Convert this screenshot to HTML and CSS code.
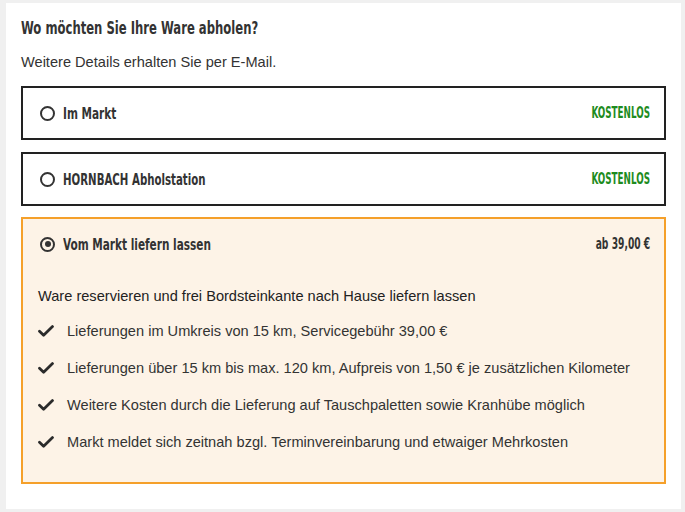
FILE: index.html
```html
<!DOCTYPE html>
<html lang="de">
<head>
<meta charset="utf-8">
<link rel="stylesheet" href="styles.css">
</head>
<body>
<div class="card">
  <h2 class="title"><span class="cond cond-title">Wo möchten Sie Ihre Ware abholen?</span></h2>
  <p class="subtitle">Weitere Details erhalten Sie per E-Mail.</p>

  <div class="option">
    <div class="option-head">
      <span class="label"><span class="radio"></span><span class="cond cond-label">Im Markt</span></span>
      <span class="price free"><span class="cond cond-caps">KOSTENLOS</span></span>
    </div>
  </div>

  <div class="option">
    <div class="option-head">
      <span class="label"><span class="radio"></span><span class="cond cond-label cond-upper">HORNBACH Abholstation</span></span>
      <span class="price free"><span class="cond cond-caps">KOSTENLOS</span></span>
    </div>
  </div>

  <div class="option selected">
    <div class="option-head">
      <span class="label"><span class="radio checked"></span><span class="cond cond-label">Vom Markt liefern lassen</span></span>
      <span class="price"><span class="cond cond-price">ab 39,00 €</span></span>
    </div>
    <div class="option-body">
      <p class="desc">Ware reservieren und frei Bordsteinkante nach Hause liefern lassen</p>
      <ul class="checks">
        <li><svg class="check" viewBox="0 0 16 12" width="16" height="12"><path d="M1.5 6.2 L5.6 10.2 L14.5 1.6" fill="none" stroke="#2b2b2b" stroke-width="2.8" stroke-linecap="round" stroke-linejoin="round"/></svg>Lieferungen im Umkreis von 15 km, Servicegebühr 39,00 €</li>
        <li><svg class="check" viewBox="0 0 16 12" width="16" height="12"><path d="M1.5 6.2 L5.6 10.2 L14.5 1.6" fill="none" stroke="#2b2b2b" stroke-width="2.8" stroke-linecap="round" stroke-linejoin="round"/></svg>Lieferungen über 15 km bis max. 120 km, Aufpreis von 1,50 € je zusätzlichen Kilometer</li>
        <li><svg class="check" viewBox="0 0 16 12" width="16" height="12"><path d="M1.5 6.2 L5.6 10.2 L14.5 1.6" fill="none" stroke="#2b2b2b" stroke-width="2.8" stroke-linecap="round" stroke-linejoin="round"/></svg>Weitere Kosten durch die Lieferung auf Tauschpaletten sowie Kranhübe möglich</li>
        <li><svg class="check" viewBox="0 0 16 12" width="16" height="12"><path d="M1.5 6.2 L5.6 10.2 L14.5 1.6" fill="none" stroke="#2b2b2b" stroke-width="2.8" stroke-linecap="round" stroke-linejoin="round"/></svg>Markt meldet sich zeitnah bzgl. Terminvereinbarung und etwaiger Mehrkosten</li>
      </ul>
    </div>
  </div>
</div>
</body>
</html>
```

FILE: styles.css
```css
html, body {
  margin: 0;
  padding: 0;
}
body {
  background: #f0f0f0;
  font-family: "Liberation Sans", Arial, sans-serif;
  color: #333;
  width: 685px;
  height: 512px;
  overflow: hidden;
}
.card {
  background: #fff;
  margin: 3px 4px 0 6px;
  height: 506px;
  padding: 15px 15px 0 15px;
  box-sizing: border-box;
}
.cond {
  display: inline-block;
  font-family: "DejaVu Sans Condensed", "DejaVu Sans", sans-serif;
  font-weight: bold;
  white-space: nowrap;
  transform-origin: left center;
}
.cond-title {
  transform: scaleX(0.76);
}
.cond-label {
  transform: scaleX(0.73);
}
.cond-upper {
  transform: scaleX(0.71);
}
.cond-caps {
  transform: scaleX(0.65);
  transform-origin: right center;
}
.cond-price {
  transform: scaleX(0.68);
  transform-origin: right center;
}
.title {
  margin: 0;
  font-size: 17px;
  line-height: 20px;
  color: #333;
}
.subtitle {
  margin: 14px 0 0 0;
  font-size: 14.6px;
  line-height: 18px;
  color: #333;
}
.option {
  border: 2px solid #222;
  margin-top: 15px;
}
.option + .option {
  margin-top: 12px;
}
.option.selected {
  margin-top: 11px;
  border-color: #f5a02a;
  background: #fdf3e7;
}
.option-head {
  height: 50px;
  display: flex;
  align-items: center;
  justify-content: space-between;
  padding: 0 14px 0 17px;
}
.label {
  display: flex;
  align-items: center;
  font-size: 16px;
  color: #333;
}
.radio {
  width: 15px;
  height: 15px;
  border: 2.5px solid #333;
  border-radius: 50%;
  box-sizing: border-box;
  margin-right: 8px;
  display: flex;
  align-items: center;
  justify-content: center;
  flex: none;
}
.radio.checked::after {
  content: "";
  width: 6px;
  height: 6px;
  border-radius: 50%;
  background: #333;
}
.price {
  font-size: 15px;
  color: #333;
}
.price.free {
  color: #1e8c1e;
}
.option-body {
  padding: 0 15px 0 15px;
}
.desc {
  margin: 18px 0 0 0;
  font-size: 14.6px;
  line-height: 18px;
  color: #222;
}
.checks {
  list-style: none;
  margin: 0;
  padding: 0 0 31px 0;
}
.checks li {
  display: flex;
  align-items: center;
  margin-top: 19px;
  font-size: 14.6px;
  line-height: 18px;
  color: #333;
}
.checks li:first-child {
  margin-top: 17px;
}
.check {
  margin-right: 13px;
  flex: none;
}
```
